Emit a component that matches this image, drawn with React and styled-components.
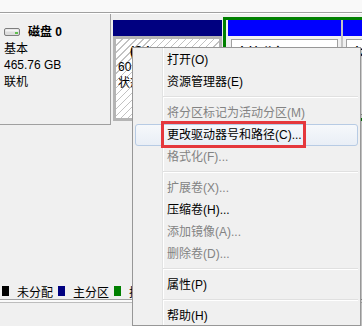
import React from 'react';
import styled, { createGlobalStyle } from 'styled-components';

const GlobalStyle = createGlobalStyle`
  html, body {
    margin: 0;
    padding: 0;
  }
  body {
    font-family: "Liberation Sans", "Noto Sans CJK SC", sans-serif;
    font-size: 12px;
  }
`;

const Screen = styled.div`
  position: relative;
  width: 362px;
  height: 326px;
  overflow: hidden;
  background: #f0f0f0;
  display: flex;
  flex-direction: column;
  color: #000;
`;

const TopStrip = styled.div`
  flex-shrink: 0;
  height: 12px;
  background: #f9f9f9;
  border-bottom: 1px solid #a0a0a0;
`;

const DiskRow = styled.div`
  flex-shrink: 0;
  box-sizing: border-box;
  height: 112px;
  display: flex;
  border-top: 1px solid #fff;
`;

const DiskInfo = styled.div`
  box-sizing: border-box;
  width: 111px;
  flex-shrink: 0;
  padding: 10px 0 0 4px;
  line-height: 16.5px;
  border-right: 1px solid #a0a0a0;
  border-bottom: 1px solid #a0a0a0;
`;

const DiskTitle = styled.div`
  display: flex;
  align-items: center;
  gap: 8px;
  font-weight: bold;
`;

const Partitions = styled.div`
  flex: 1;
  min-width: 0;
  display: flex;
  padding: 3px 0 4px 2px;
`;

const Primary = styled.div`
  width: 109px;
  flex-shrink: 0;
  margin: 3px 1px 0 0;
  display: flex;
  flex-direction: column;
`;

const Header = styled.div`
  height: 16px;
  flex-shrink: 0;
  background: ${(p) => p.color};
`;

const HatchedBody = styled.div`
  flex: 1;
  border: 3px solid #b4b4b4;
  padding: 4px 0 0 2px;
  line-height: 16px;
  overflow: hidden;
  white-space: nowrap;
  background-color: #fff;
  background-image: repeating-linear-gradient(135deg, transparent 0 4px, #c2c2c2 4px 5px);
`;

const VolumeName = styled.div`
  font-weight: bold;
  margin-left: 12px;
`;

const Extended = styled.div`
  flex: 1;
  min-width: 0;
  display: flex;
  border: 3px solid #008000;
  border-right: none;
  padding-left: 2px;
  overflow: hidden;
`;

const Logical = styled.div`
  width: 113px;
  flex-shrink: 0;
  display: flex;
  flex-direction: column;
  border-left: ${(p) => (p.first ? 'none' : '2px solid #c4c4c4')};
`;

const LogicalBody = styled.div`
  flex: 1;
  display: flex;
  padding: 3px;
`;

const VolumeBox = styled.div`
  flex: 1;
  background: #fff;
  border: 1px solid #a0a0a0;
  padding: 5px 0 0 4px;
  line-height: 16px;
  white-space: nowrap;
  overflow: hidden;
`;

const Filler = styled.div`
  flex: 1;
`;

const Legend = styled.div`
  flex-shrink: 0;
  height: 16px;
  display: flex;
  align-items: center;
  padding-left: 2px;
  border-bottom: 1px solid #a0a0a0;
  white-space: nowrap;
`;

const LegendItem = styled.div`
  display: flex;
  align-items: center;
  margin-right: 5px;
`;

const Swatch = styled.span`
  width: 7px;
  height: 10px;
  margin-right: 8px;
  background: ${(p) => p.color};
`;

const StatusGap = styled.div`
  flex-shrink: 0;
  height: 2px;
  background: #fafafa;
  border-bottom: 1px solid #bdbdbd;
`;

const StatusArea = styled.div`
  flex-shrink: 0;
  height: 23px;
`;

const Menu = styled.div`
  position: absolute;
  left: 132px;
  top: 47px;
  width: 229px;
  height: 279px;
  box-sizing: border-box;
  padding: 1px 2px;
  border: 1px solid #979797;
  box-shadow: 2px 2px 2px rgba(0, 0, 0, 0.22);
  background: linear-gradient(
    to right,
    #f0f0f0 29px,
    #e2e3e3 29px,
    #e2e3e3 30px,
    #fff 30px,
    #fff 31px,
    #f0f0f0 31px
  );
`;

const Item = styled.div`
  position: relative;
  box-sizing: border-box;
  height: 22px;
  line-height: ${(p) => (p.active ? '20px' : '22px')};
  padding-left: ${(p) => (p.active ? '31px' : '32px')};
  color: ${(p) => (p.disabled ? '#838383' : '#000')};
  white-space: nowrap;
  border: ${(p) => (p.active ? '1px solid #b7cbe4' : 'none')};
  border-radius: 3px;
  background: ${(p) => (p.active ? 'linear-gradient(#f6f8fb, #e9eef6)' : 'transparent')};
`;

const Separator = styled.div`
  height: 0;
  margin: 3px 0 4px 28px;
  border-top: 1px solid #e0e0e0;
  border-bottom: 1px solid #fff;
`;

const Callout = styled.div`
  position: absolute;
  top: -4px;
  left: 25px;
  width: 145px;
  height: 27px;
  box-sizing: border-box;
  border: 3px solid #e5383d;
`;

const DiskIcon = () => (
  <svg width="16" height="8" viewBox="0 0 16 8">
    <rect x="0.5" y="0.5" width="15" height="7" rx="1.5" fill="#dcdcdc" stroke="#7d7d7d" />
    <rect x="1.5" y="1.5" width="13" height="2" fill="#f4f4f4" />
    <rect x="11" y="4" width="3" height="2" fill="#5fbf4f" />
  </svg>
);

const menuItems = [
  { label: '打开(O)' },
  { label: '资源管理器(E)' },
  { sep: true },
  { label: '将分区标记为活动分区(M)', disabled: true },
  { label: '更改驱动器号和路径(C)...', active: true },
  { label: '格式化(F)...', disabled: true },
  { sep: true },
  { label: '扩展卷(X)...', disabled: true },
  { label: '压缩卷(H)...' },
  { label: '添加镜像(A)...', disabled: true },
  { label: '删除卷(D)...', disabled: true },
  { sep: true },
  { label: '属性(P)' },
  { sep: true },
  { label: '帮助(H)' },
];

const legend = [
  { color: '#000', label: '未分配' },
  { color: '#000080', label: '主分区' },
  { color: '#008000', label: '扩展分区' },
  { color: '#0000ff', label: '逻辑驱动器' },
];

export default function App() {
  return (
    <>
      <GlobalStyle />
      <Screen>
        <TopStrip />
        <DiskRow>
          <DiskInfo>
            <DiskTitle>
              <DiskIcon />
              <span>磁盘 0</span>
            </DiskTitle>
            <div>基本</div>
            <div>465.76 GB</div>
            <div>联机</div>
          </DiskInfo>
          <Partitions>
            <Primary>
              <Header color="#000080" />
              <HatchedBody>
                <VolumeName>(C:)</VolumeName>
                <div>60.00 GB NTFS</div>
                <div>状态良好 (系统, 启动, 活动)</div>
              </HatchedBody>
            </Primary>
            <Extended>
              <Logical first>
                <Header color="#0000ff" />
                <LogicalBody>
                  <VolumeBox>
                    <b>本地磁盘 (D:)</b>
                    <div>200.00 GB NTFS</div>
                    <div>状态良好 (逻辑驱动器)</div>
                  </VolumeBox>
                </LogicalBody>
              </Logical>
              <Logical>
                <Header color="#0000ff" />
                <LogicalBody>
                  <VolumeBox>
                    <b>本地磁盘 (E:)</b>
                  </VolumeBox>
                </LogicalBody>
              </Logical>
            </Extended>
          </Partitions>
        </DiskRow>
        <Filler />
        <Legend>
          {legend.map((l) => (
            <LegendItem key={l.label}>
              <Swatch color={l.color} />
              {l.label}
            </LegendItem>
          ))}
        </Legend>
        <StatusGap />
        <StatusArea />

        <Menu>
          {menuItems.map((m, i) =>
            m.sep ? (
              <Separator key={i} />
            ) : (
              <Item key={i} disabled={m.disabled} active={m.active}>
                {m.label}
                {m.active && <Callout />}
              </Item>
            )
          )}
        </Menu>
      </Screen>
    </>
  );
}
